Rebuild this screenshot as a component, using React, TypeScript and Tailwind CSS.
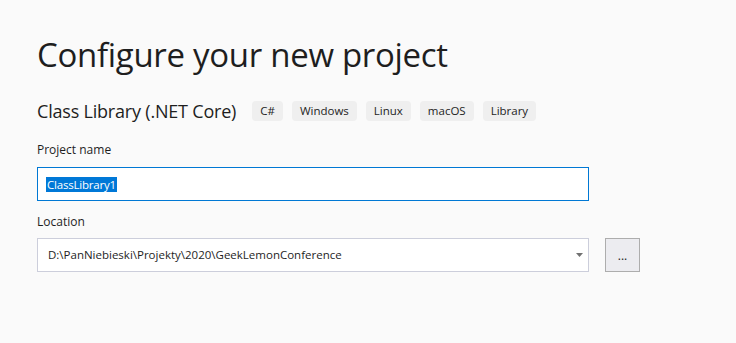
import React from "react";

export default function App() {
  const tags = ["C#", "Windows", "Linux", "macOS", "Library"];
  return (
    <div
      className="w-[736px] h-[343px] bg-[#fafafa] pl-[37px] pt-[35px] text-[#1e1e1e]"
      style={{ fontFamily: '"Open Sans", "Noto Sans", sans-serif' }}
    >
      <h1 className="text-[33px] leading-[40px] tracking-[-0.3px] font-normal">Configure your new project</h1>
      <div className="mt-[25px] flex items-center h-[22px]">
        <span className="text-[18px] leading-[22px] tracking-[-0.2px]">Class Library (.NET Core)</span>
        <div className="ml-[16px] flex gap-[9px]">
          {tags.map((t) => (
            <span
              key={t}
              className="h-[20px] px-[8px] rounded-[4px] bg-[#efefef] text-[11.5px] leading-[20px] flex items-center"
            >
              {t}
            </span>
          ))}
        </div>
      </div>
      <div className="mt-[20px] text-[12px] leading-[16px]">Project name</div>
      <div className="mt-[9px] w-[552px] h-[34px] border border-[#0078d4] bg-white flex items-center pl-[8px]">
        <span className="bg-[#0078d7] text-white text-[11.5px] leading-[15px] px-[1px] tracking-[-0.2px]">ClassLibrary1</span>
      </div>
      <div className="mt-[13px] text-[12px] leading-[16px]">Location</div>
      <div className="mt-[8px] flex gap-[16px]">
        <div className="w-[552px] h-[34px] border border-[#cccedb] bg-white flex items-center pl-[10px] pr-[5px]">
          <span className="flex-1 text-[11.5px]">D:\PanNiebieski\Projekty\2020\GeekLemonConference</span>
          <svg width="7" height="4" viewBox="0 0 7 4">
            <path d="M0 0h7L3.5 4z" fill="#717171" />
          </svg>
        </div>
        <div className="w-[35px] h-[34px] border border-[#adadad] bg-[#ececf0] flex items-center justify-center text-[12px] leading-none pt-[2px]">
          ...
        </div>
      </div>
    </div>
  );
}
